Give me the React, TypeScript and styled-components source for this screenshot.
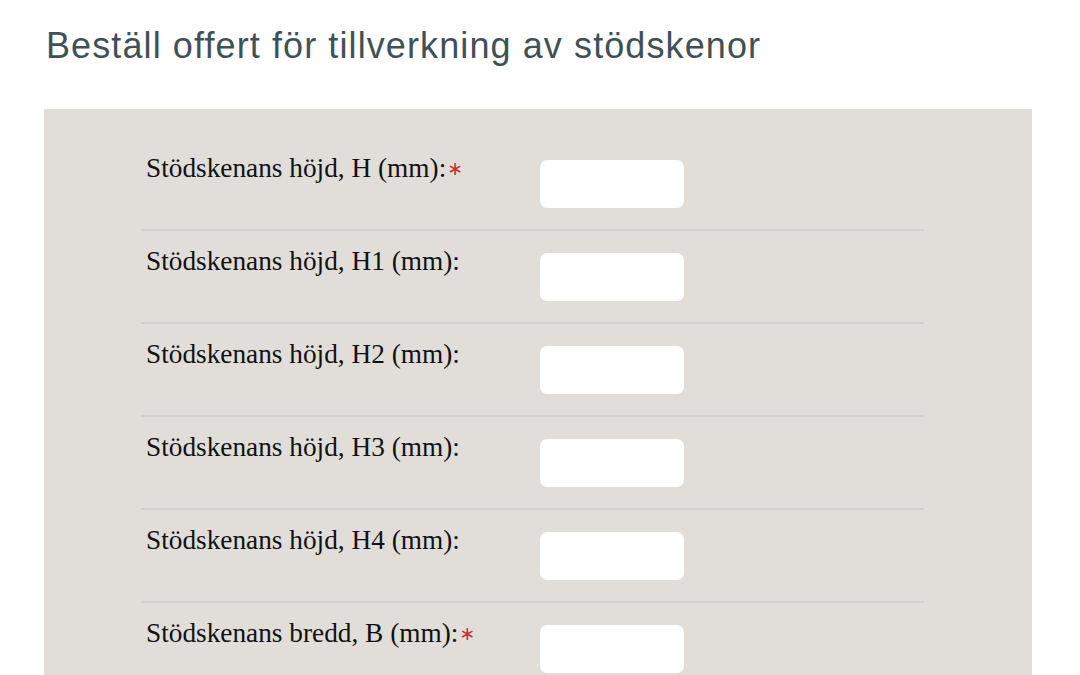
import React from "react";
import styled, { createGlobalStyle } from "styled-components";

const GlobalStyle = createGlobalStyle`
    html, body {
        margin: 0;
        padding: 0;
        background: #ffffff;
    }
`;

const Page = styled.div`
    padding: 0 48px 0 44px;
`;

const Title = styled.h1`
    margin: 0;
    padding: 25px 0 0 2px;
    height: 109px;
    box-sizing: border-box;
    font-family: "Liberation Sans", Arial, sans-serif;
    font-weight: 400;
    font-size: 36px;
    line-height: 41px;
    letter-spacing: 1.1px;
    color: #3f5156;
`;

const Panel = styled.form`
    background: #e1ddd8;
    padding: 29px 0 40px 97px;
    display: flex;
    flex-direction: column;
    height: 700px;
    box-sizing: border-box;
`;

const Row = styled.div<{ $last?: boolean }>`
    display: grid;
    grid-template-columns: 399px 144px;
    align-items: start;
    width: 783px;
    padding: 22px 0 21px;
    border-bottom: ${(p) => (p.$last ? "none" : "2px solid #d1d1d2")};
`;

const Label = styled.label`
    padding: 0 0 0 5px;
    margin-top: -7px;
    font-family: "Liberation Serif", "Times New Roman", serif;
    font-size: 27.3px;
    line-height: 31px;
    color: #111111;
`;

const Required = styled.span`
    position: relative;
    top: -2px;
    color: #cc3030;
    font-family: "DejaVu Sans", sans-serif;
    font-size: 19px;
    margin-left: 1px;
`;

const Input = styled.input`
    width: 144px;
    height: 48px;
    box-sizing: border-box;
    border: none;
    border-radius: 7px;
    background: #ffffff;
    outline: none;
    padding: 0 10px;
`;

const fields = [
    { label: "Stödskenans höjd, H (mm):", required: true },
    { label: "Stödskenans höjd, H1 (mm):", required: false },
    { label: "Stödskenans höjd, H2 (mm):", required: false },
    { label: "Stödskenans höjd, H3 (mm):", required: false },
    { label: "Stödskenans höjd, H4 (mm):", required: false },
    { label: "Stödskenans bredd, B (mm):", required: true },
];

const App: React.FC = () => {
    return (
        <Page>
            <GlobalStyle />
            <Title>Beställ offert för tillverkning av stödskenor</Title>
            <Panel onSubmit={(e) => e.preventDefault()}>
                {fields.map((f, i) => (
                    <Row key={i} $last={i === fields.length - 1}>
                        <Label htmlFor={`field-${i}`}>
                            {f.label}
                            {f.required && <Required>∗</Required>}
                        </Label>
                        <Input id={`field-${i}`} type="text" />
                    </Row>
                ))}
            </Panel>
        </Page>
    );
};

export default App;
